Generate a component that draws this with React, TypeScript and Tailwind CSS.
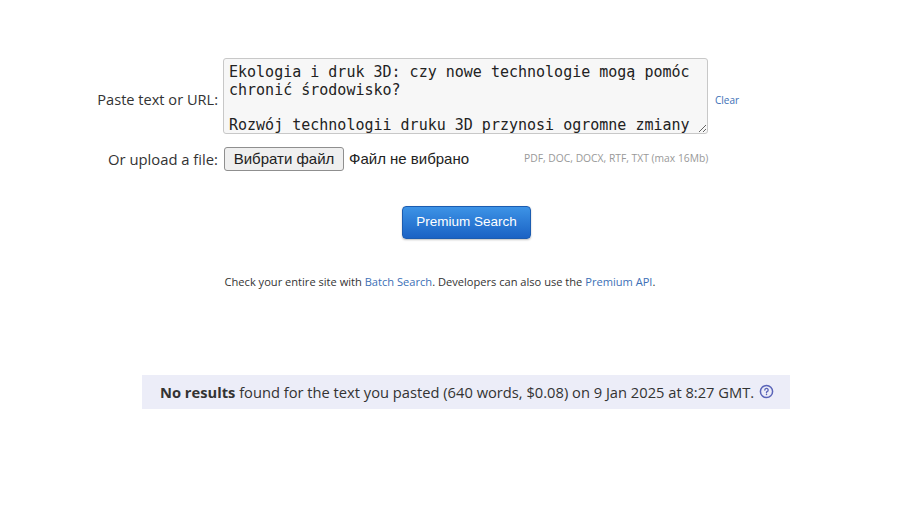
export default function App() {
    const text =
        "Ekologia i druk 3D: czy nowe technologie mogą pomóc chronić środowisko?\n\nRozwój technologii druku 3D przynosi ogromne zmiany w wielu dziedzinach.";

    return (
        <div className="w-[920px] h-[516px] bg-white text-[#333] font-['Open_Sans',sans-serif] overflow-hidden">
            <div className="pt-[58px]">
                {/* Paste row */}
                <div className="flex items-center">
                    <label className="w-[218px] text-right text-[14.6px] mt-[8px]">Paste text or URL:</label>
                    <textarea
                        readOnly
                        value={text}
                        className="ml-[5px] w-[485px] h-[76px] resize-y bg-[#f7f7f7] border border-[#c8c8c8] rounded-[3px] px-[5px] pt-[5px] text-[15px] leading-[17.5px] text-[#222] font-['DejaVu_Sans_Mono',monospace] overflow-hidden outline-none"
                    />
                    <a className="ml-[7px] mt-[8px] text-[10px] text-[#3b6fb6]">Clear</a>
                </div>

                {/* Upload row */}
                <div className="flex items-center mt-[13px]">
                    <label className="w-[218px] text-right text-[14.8px]">Or upload a file:</label>
                    <button className="ml-[6px] w-[120px] h-[24px] bg-[#efefef] border border-[#8f8f8f] rounded-[3px] text-[15px] text-[#222] font-['Liberation_Sans',sans-serif]">
                        Вибрати файл
                    </button>
                    <span className="ml-[5px] w-[170px] text-[15px] text-[#222] font-['Liberation_Sans',sans-serif]">Файл не вибрано</span>
                    <span className="ml-[5px] text-[10.3px] text-[#999]">PDF, DOC, DOCX, RTF, TXT (max 16Mb)</span>
                </div>

                {/* Search button */}
                <div className="flex justify-center mt-[35px] pl-[13px]">
                    <button className="w-[129px] h-[33px] rounded-[4px] border border-[#1c5cb0] bg-gradient-to-b from-[#3d93e6] to-[#1b62c4] text-white text-[13.5px] font-['Liberation_Sans',sans-serif] shadow-[0_1px_2px_rgba(0,0,0,0.25)]">
                        Premium Search
                    </button>
                </div>

                {/* Hint line */}
                <p className="text-center text-[11.1px] text-[#333] mt-[35px] pr-[40px]">
                    Check your entire site with <a className="text-[#3b6fb6]">Batch Search</a>. Developers can also use the{" "}
                    <a className="text-[#3b6fb6]">Premium API</a>.
                </p>

                {/* Result */}
                <div className="ml-[142px] mt-[84px] w-[648px] h-[34px] bg-[#ecedf8] flex items-center pl-[18px] text-[14.7px] text-[#333]">
                    <span>
                        <b className="font-bold">No results</b> found for the text you pasted (640 words, $0.08) on 9 Jan 2025 at 8:27 GMT.
                    </span>
                    <svg className="ml-[5px]" width="15" height="15" viewBox="0 0 16 16" fill="none">
                        <circle cx="8" cy="8" r="6.5" stroke="#5a64b8" strokeWidth="1.6" />
                        <path d="M6.2 6.4a1.8 1.8 0 1 1 2.4 1.7c-.4.2-.6.5-.6.9v.4" stroke="#5a64b8" strokeWidth="1.4" strokeLinecap="round" />
                        <circle cx="8" cy="11.2" r="0.8" fill="#5a64b8" />
                    </svg>
                </div>
            </div>
        </div>
    );
}
